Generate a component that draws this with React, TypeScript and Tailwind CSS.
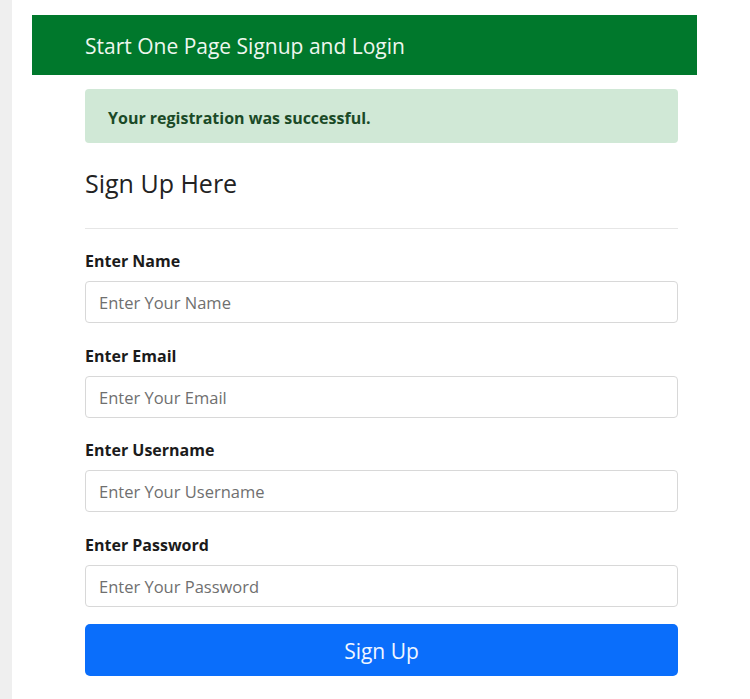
import React from "react";

const fields = [
  { label: "Enter Name", ph: "Enter Your Name", type: "text", gap: "" },
  { label: "Enter Email", ph: "Enter Your Email", type: "email", gap: "mt-[23px]" },
  { label: "Enter Username", ph: "Enter Your Username", type: "text", gap: "mt-[22px]" },
  { label: "Enter Password", ph: "Enter Your Password", type: "password", gap: "mt-[23px]" },
];

export default function App() {
  return (
    <div
      className="flex min-h-[699px] w-[750px] bg-white"
      style={{ fontFamily: '"Open Sans", "Noto Sans", Arial, sans-serif' }}
    >
      <div className="w-[12px] shrink-0 bg-[#efefef]" />
      <div className="flex flex-col pl-[20px]">
        <div className="mt-[15px] flex h-[60px] w-[665px] items-center bg-[#00782c] pl-[53px] pt-[3px] text-[21px] text-[#eef7ef]">
          Start One Page Signup and Login
        </div>
        <div className="ml-[53px] flex w-[593px] flex-col">
          <div className="mt-[14px] flex h-[54px] items-center rounded-[4px] bg-[#d0e8d6] pl-[23px] pt-[3px] text-[16px] font-bold text-[#1a4a27]">
            Your registration was successful.
          </div>
          <h2 className="mt-[24px] text-[25px] leading-[32px] text-[#222]">Sign Up Here</h2>
          <div className="mt-[29px] h-px bg-[#e6e6e6]" />
          <form className="mt-[22px] flex flex-col">
            {fields.map((f) => (
              <div key={f.label} className={f.gap}>
                <label className="block text-[16px] font-bold leading-[20px] text-[#1b1b1b]">{f.label}</label>
                <input
                  type={f.type}
                  placeholder={f.ph}
                  className="mt-[10px] h-[42px] w-full rounded-[4px] border border-[#d8d8d8] bg-white px-[13px] text-[16.5px] text-[#333] placeholder:text-[#6f6f6f] outline-none"
                />
              </div>
            ))}
            <button
              type="button"
              className="mt-[17px] h-[52px] w-full rounded-[5px] bg-[#0a6efb] pt-[4px] text-[21px] text-[#f0f6ff]"
            >
              Sign Up
            </button>
          </form>
        </div>
      </div>
    </div>
  );
}
